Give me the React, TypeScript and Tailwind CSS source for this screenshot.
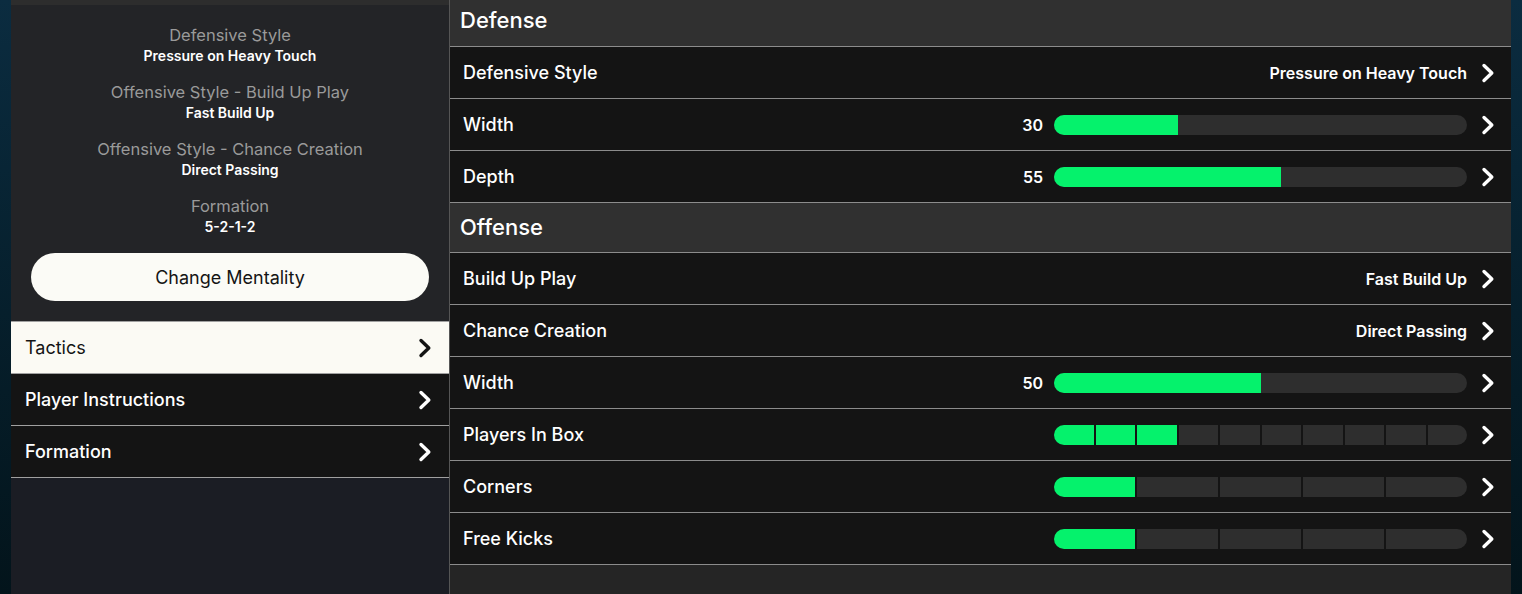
import React from "react";

const FONT = { fontFamily: "Inter, 'Noto Sans', sans-serif" };

// Bold chevron used on every row
const Chevron = ({ dark = false }: { dark?: boolean }) => (
  <svg width="14" height="20" viewBox="0 0 14 20" className="shrink-0">
    <polyline
      points="3,2.5 10.8,10 3,17.5"
      fill="none"
      stroke={dark ? "#141414" : "#ffffff"}
      strokeWidth="3.4"
      strokeLinecap="round"
      strokeLinejoin="round"
    />
  </svg>
);

const summary = [
  { label: "Defensive Style", value: "Pressure on Heavy Touch" },
  { label: "Offensive Style - Build Up Play", value: "Fast Build Up" },
  { label: "Offensive Style - Chance Creation", value: "Direct Passing" },
  { label: "Formation", value: "5-2-1-2" },
];

const menu = ["Tactics", "Player Instructions", "Formation"];

type Row =
  | { label: string; kind: "text"; value: string }
  | { label: string; kind: "bar"; value: number }
  | { label: string; kind: "seg"; total: number; filled: number };

const defense: Row[] = [
  { label: "Defensive Style", kind: "text", value: "Pressure on Heavy Touch" },
  { label: "Width", kind: "bar", value: 30 },
  { label: "Depth", kind: "bar", value: 55 },
];

const offense: Row[] = [
  { label: "Build Up Play", kind: "text", value: "Fast Build Up" },
  { label: "Chance Creation", kind: "text", value: "Direct Passing" },
  { label: "Width", kind: "bar", value: 50 },
  { label: "Players In Box", kind: "seg", total: 10, filled: 3 },
  { label: "Corners", kind: "seg", total: 5, filled: 1 },
  { label: "Free Kicks", kind: "seg", total: 5, filled: 1 },
];

function RowValue({ row }: { row: Row }) {
  if (row.kind === "text") {
    return <span className="text-[16px] font-semibold text-white">{row.value}</span>;
  }
  if (row.kind === "bar") {
    return (
      <div className="flex items-center gap-[11px]">
        <span className="w-[30px] text-right text-[16px] font-semibold text-white">{row.value}</span>
        <div className="h-[20px] w-[413px] overflow-hidden rounded-full bg-[#2e2e2e]">
          <div className="h-full bg-[#05f26c]" style={{ width: `${row.value}%` }} />
        </div>
      </div>
    );
  }
  return (
    <div className="flex h-[20px] w-[413px] gap-[2px] overflow-hidden rounded-full">
      {Array.from({ length: row.total }).map((_, i) => (
        <div key={i} className={`flex-1 ${i < row.filled ? "bg-[#05f26c]" : "bg-[#2e2e2e]"}`} />
      ))}
    </div>
  );
}

function Section({ title, rows, first }: { title: string; rows: Row[]; first?: boolean }) {
  return (
    <>
      <div
        className={`flex items-center border-b border-[#8c8c8c] bg-[#303030] pl-[10px] text-[22px] font-medium text-white ${
          first ? "h-[47px] pb-[5px]" : "h-[50px]"
        }`}
      >
        {title}
      </div>
      {rows.map((row) => (
        <div
          key={title + row.label}
          className="flex h-[52px] items-center justify-between border-b border-[#8c8c8c] bg-[#141414] pl-[13px] pr-[16px]"
        >
          <span className="text-[18px] font-medium text-white">{row.label}</span>
          <div className="flex items-center gap-[14px]">
            <RowValue row={row} />
            <Chevron />
          </div>
        </div>
      ))}
    </>
  );
}

export default function App() {
  return (
    <div
      className="flex h-[594px] w-[1522px] overflow-hidden bg-gradient-to-b from-[#0b2c40] to-[#03141b] px-[11px]"
      style={FONT}
    >
      {/* Left summary panel */}
      <div className="flex w-[438px] shrink-0 flex-col bg-[#1b1d24]">
        <div className="bg-[#232427]">
          <div className="h-[5px] bg-[#2d2d2d]" />
          <div className="flex flex-col items-center gap-[16px] pt-[20px]">
            {summary.map((s) => (
              <div key={s.label} className="flex flex-col items-center">
                <span className="text-[16.5px] leading-[20px] text-[#9a9a9a]">{s.label}</span>
                <span className="text-[14px] font-semibold leading-[21px] text-white">{s.value}</span>
              </div>
            ))}
          </div>
          <div className="px-[20px] pb-[20px] pt-[16px]">
            <button className="h-[48px] w-full rounded-full bg-[#fbfbf6] text-[18px] text-[#141414]">
              Change Mentality
            </button>
          </div>
        </div>
        <div className="border-t border-[#a0a0a0]">
          {menu.map((m, i) => (
            <div
              key={m}
              className={`flex h-[52px] items-center justify-between border-b border-[#a0a0a0] pl-[14px] pr-[17px] text-[18px] ${
                i === 0 ? "bg-[#fbfaf4] text-[#141414]" : "bg-[#141414] font-medium text-white"
              }`}
            >
              <span>{m}</span>
              <Chevron dark={i === 0} />
            </div>
          ))}
        </div>
      </div>

      {/* Right tactics list */}
      <div className="flex flex-1 flex-col border-l border-[#555555] bg-[#252525]">
        <Section title="Defense" rows={defense} first />
        <Section title="Offense" rows={offense} />
      </div>
    </div>
  );
}
